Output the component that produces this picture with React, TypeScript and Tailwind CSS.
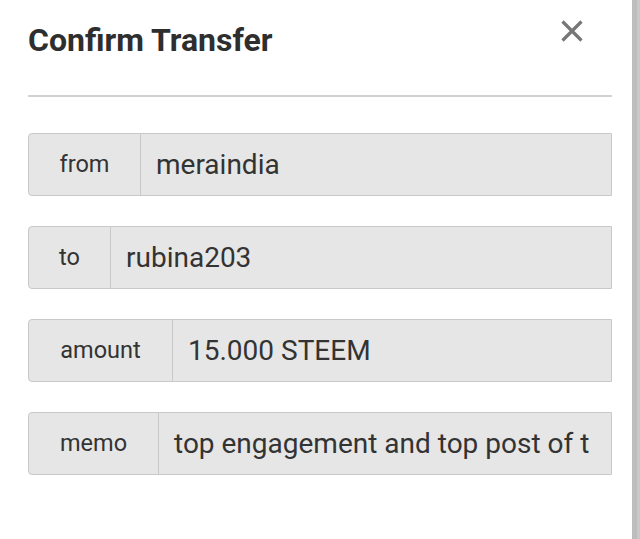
const ROWS = [
  { label: "from", value: "meraindia", labelWidth: "w-[112px]" },
  { label: "to", value: "rubina203", labelWidth: "w-[82px]" },
  { label: "amount", value: "15.000 STEEM", labelWidth: "w-[144px]" },
  { label: "memo", value: "top engagement and top post of t", labelWidth: "w-[130px]" },
]

export default function App() {
  return (
    <div className="flex h-[539px] w-[640px] overflow-hidden bg-white font-['Roboto',sans-serif] text-[#333]">
      <div className="flex-1 pl-[28px] pr-[20px]">
        {/* Header */}
        <div className="flex items-start justify-between">
          <h1 className="pt-[21px] text-[32px] font-bold leading-[38px] text-[#2e2e2e]">Confirm Transfer</h1>
          <button className="mr-[29px] mt-[20px] text-[#777]">
            <svg width="22" height="22" viewBox="0 0 22 22" fill="none" stroke="currentColor" strokeWidth="3.2">
              <path d="M1.5 1.5 20.5 20.5M20.5 1.5 1.5 20.5" />
            </svg>
          </button>
        </div>

        <div className="mt-[36px] h-[2px] bg-[#d2d2d2]" />

        {/* Fields */}
        <div className="mt-[36px] flex flex-col gap-[30px]">
          {ROWS.map((row) => (
            <div
              key={row.label}
              className="flex h-[63px] overflow-hidden rounded-l-[4px] border border-[#c9c9c9] bg-[#e6e6e6]"
            >
              <div
                className={`${row.labelWidth} flex shrink-0 items-center justify-center border-r border-[#c9c9c9] text-[23.5px]`}
              >
                {row.label}
              </div>
              <div className="flex min-w-0 flex-1 items-center overflow-hidden whitespace-nowrap pl-[15px] pr-[16px] text-[28px]">
                {row.value}
              </div>
            </div>
          ))}
        </div>
      </div>

      {/* Scrollbar */}
      <div className="flex w-[8px]">
        <div className="w-[5px] bg-[#bdbdbd]" />
        <div className="flex-1 bg-[#c9c9c9]" />
      </div>
    </div>
  )
}
